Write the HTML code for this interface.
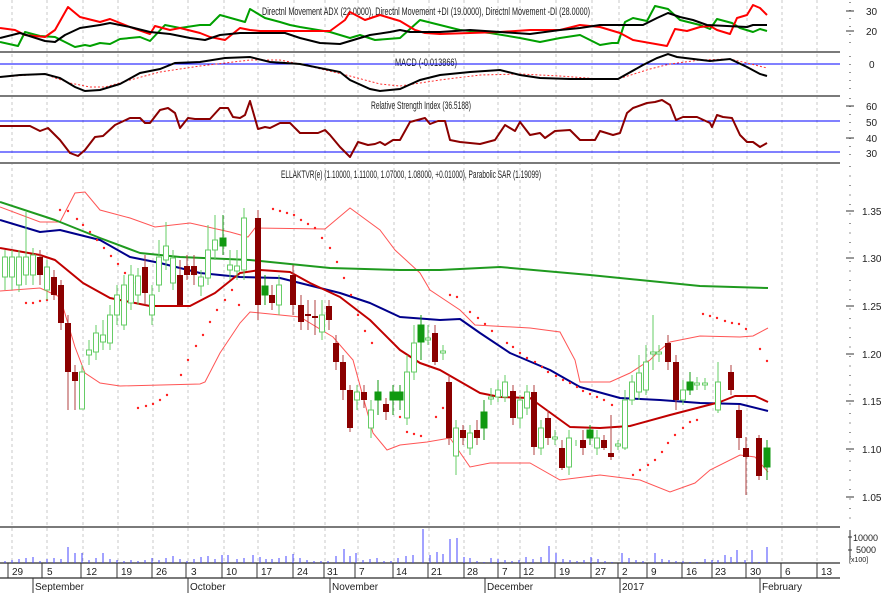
<!DOCTYPE html>
<html><head><meta charset="utf-8"><style>
html,body{margin:0;padding:0;background:#fff;}
svg{display:block;font-family:"Liberation Sans Narrow","Liberation Sans",sans-serif;}
</style></head><body>
<svg width="881" height="593" viewBox="0 0 881 593" xmlns="http://www.w3.org/2000/svg">
<rect width="881" height="593" fill="#fff"/>
<g stroke="#c8c8c8" stroke-width="1" stroke-dasharray="3,3">
<line x1="12" y1="0" x2="12" y2="563"/><line x1="47" y1="0" x2="47" y2="563"/><line x1="83" y1="0" x2="83" y2="563"/><line x1="118" y1="0" x2="118" y2="563"/><line x1="153" y1="0" x2="153" y2="563"/><line x1="188" y1="0" x2="188" y2="563"/><line x1="224" y1="0" x2="224" y2="563"/><line x1="258" y1="0" x2="258" y2="563"/><line x1="294" y1="0" x2="294" y2="563"/><line x1="325" y1="0" x2="325" y2="563"/><line x1="358" y1="0" x2="358" y2="563"/><line x1="394" y1="0" x2="394" y2="563"/><line x1="429" y1="0" x2="429" y2="563"/><line x1="464" y1="0" x2="464" y2="563"/><line x1="498" y1="0" x2="498" y2="563"/><line x1="520" y1="0" x2="520" y2="563"/><line x1="556" y1="0" x2="556" y2="563"/><line x1="592" y1="0" x2="592" y2="563"/><line x1="619" y1="0" x2="619" y2="563"/><line x1="647" y1="0" x2="647" y2="563"/><line x1="683" y1="0" x2="683" y2="563"/><line x1="713" y1="0" x2="713" y2="563"/><line x1="747" y1="0" x2="747" y2="563"/><line x1="782" y1="0" x2="782" y2="563"/><line x1="817" y1="0" x2="817" y2="563"/>
</g>
<g stroke="#7a7a7a" stroke-width="2">
<line x1="0" y1="52" x2="840" y2="52"/><line x1="0" y1="96" x2="840" y2="96"/><line x1="0" y1="163" x2="840" y2="163"/><line x1="0" y1="527" x2="840" y2="527"/><line x1="0" y1="563" x2="840" y2="563"/><line x1="0" y1="578" x2="840" y2="578"/>
</g>
<g stroke="#333" stroke-width="1">
<line x1="850" y1="2" x2="850" y2="50" stroke-dasharray="1,7"/>
<line x1="850" y1="56" x2="850" y2="94" stroke-dasharray="1,7"/>
<line x1="850" y1="98" x2="850" y2="161" stroke-dasharray="1,7"/>
<line x1="850" y1="166" x2="850" y2="524" stroke-dasharray="1,8.5"/>
<line x1="846" y1="11" x2="854" y2="11"/><line x1="846" y1="31" x2="854" y2="31"/><line x1="846" y1="106" x2="854" y2="106"/><line x1="846" y1="138" x2="854" y2="138"/>
<line x1="846" y1="211" x2="854" y2="211"/><line x1="846" y1="258" x2="854" y2="258"/><line x1="846" y1="306" x2="854" y2="306"/><line x1="846" y1="354" x2="854" y2="354"/><line x1="846" y1="401" x2="854" y2="401"/><line x1="846" y1="449" x2="854" y2="449"/><line x1="846" y1="497" x2="854" y2="497"/>
<line x1="848" y1="537" x2="852" y2="537"/><line x1="848" y1="550" x2="852" y2="550"/><line x1="850" y1="530" x2="850" y2="560"/>
</g>
<g font-size="10" fill="#222">
<text x="866" y="15">30</text><text x="866" y="35">20</text><text x="869" y="68">0</text>
<text x="866" y="110">60</text><text x="866" y="126">50</text><text x="866" y="142">40</text><text x="866" y="157">30</text>
<text x="862" y="215">1.35</text><text x="862" y="262">1.30</text><text x="862" y="310">1.25</text><text x="862" y="358">1.20</text><text x="862" y="405">1.15</text><text x="862" y="453">1.10</text><text x="862" y="501">1.05</text>
<text x="853" y="541" font-size="9">10000</text><text x="856" y="553" font-size="9">5000</text><text x="849" y="562" font-size="7">[x100]</text>
</g>
<g font-size="11" fill="#222">
<text x="262" y="15" textLength="328" lengthAdjust="spacingAndGlyphs">Directnl Movement ADX (22.0000), Directnl Movement +DI (19.0000), Directnl Movement -DI (28.0000)</text>
<text x="395" y="66" textLength="62" lengthAdjust="spacingAndGlyphs">MACD (-0.013866)</text>
<text x="371" y="109" textLength="100" lengthAdjust="spacingAndGlyphs">Relative Strength Index (36.5188)</text>
<text x="281" y="178" textLength="260" lengthAdjust="spacingAndGlyphs">ELLAKTVR(e) (1.10000, 1.11000, 1.07000, 1.08000, +0.01000), Parabolic SAR (1.19099)</text>
</g>
<g fill="none" stroke-width="2" stroke-linejoin="round">
<polyline stroke="#00a000" points="0,42 18,46 25,32 40,36 55,37 75,47 85,45 90,46 100,43 110,44 120,39 140,37 150,41 165,25 180,28 200,25 210,25 220,15 245,22 250,9 265,18 280,22 290,25 300,27 330,32 350,38 360,35 375,40 400,38 420,20 440,25 460,30 490,33 520,38 540,42 560,38 580,35 600,45 612,43 618,43 625,22 633,18 647,21 655,6 668,9 680,20 700,25 710,29 717,19 732,23 740,28 753,32 760,29 767,31"/>
<polyline stroke="#ff0000" points="0,28 15,30 25,35 45,37 55,30 68,7 80,17 100,22 110,19 130,27 150,34 155,26 170,30 180,28 200,33 210,37 225,40 240,28 250,30 260,31 330,31 345,20 350,12 365,20 380,15 400,21 415,30 425,33 440,34 470,33 500,32 530,30 560,30 580,25 600,27 620,33 633,40 667,46 675,29 687,31 700,27 710,26 717,30 730,34 737,18 747,15 753,5 760,8 767,15"/>
<polyline stroke="#000" points="0,38 20,33 45,41 55,42 65,35 80,28 100,25 110,23 130,27 150,32 170,34 190,38 205,40 220,35 240,33 285,33 300,38 320,43 340,44 350,41 370,35 390,32 400,30 410,32 440,32 470,30 500,32 530,34 560,30 580,28 600,25 643,25 657,18 668,13 680,17 693,20 707,25 747,27 753,25 767,25"/>
</g>
<line x1="0" y1="64" x2="840" y2="64" stroke="#0000ff" stroke-width="1"/>
<polyline fill="none" stroke="#ff3030" stroke-width="1" stroke-dasharray="2,2" points="0,77 45,74 55,78 70,83 90,87 105,87 130,80 160,72 200,66 250,60 280,60 300,64 350,76 380,84 400,86 440,80 480,75 520,74 560,76 600,79 618,79 650,69 670,64 700,60 730,59 747,63 767,68"/>
<polyline fill="none" stroke="#000" stroke-width="2" points="0,77 20,75 45,74 60,78 75,87 85,91 100,90 120,84 140,73 160,69 175,63 200,62 225,58 250,57 270,62 300,64 340,72 350,80 370,89 380,91 400,89 420,80 440,75 470,72 500,70 520,75 540,78 570,79 618,79 643,65 657,58 668,54 677,57 710,61 730,59 747,67 760,74 767,76"/>
<line x1="0" y1="121" x2="840" y2="121" stroke="#0000ff"/><line x1="0" y1="152" x2="840" y2="152" stroke="#0000ff"/>
<polyline fill="none" stroke="#8b0000" stroke-width="2" stroke-linejoin="round" points="0,126 30,126 40,131 48,128 60,140 70,153 78,156 85,150 95,137 103,136 115,125 130,118 140,118 145,123 150,123 160,110 168,108 175,113 180,128 188,118 195,119 210,119 220,108 228,108 233,117 240,118 245,115 250,101 258,129 265,127 270,128 280,123 290,123 300,133 318,133 325,130 330,135 340,147 350,157 358,142 368,145 375,144 380,142 385,145 393,140 400,140 410,122 425,118 430,124 438,121 445,121 450,140 460,142 480,144 495,140 505,125 515,131 520,122 530,135 540,133 545,138 555,131 570,130 580,140 595,140 600,131 613,135 620,133 627,113 633,108 647,103 655,102 662,100 670,105 676,120 683,117 697,117 710,123 712,127 717,115 723,117 732,118 740,135 747,142 753,142 760,147 767,143"/>
<g fill="none" stroke="#ff5555" stroke-width="1">
<polyline points="0,207 40,222 60,222 75,193 85,192 100,210 130,218 155,227 190,223 230,232 248,237 255,228 325,229 350,208 380,230 395,250 420,273 430,290 460,310 475,325 530,328 560,332 575,360 580,382 610,382 630,373 650,360 660,350 670,342 700,336 740,337 753,336 768,328"/>
<polyline points="0,291 40,288 60,297 75,347 85,373 100,383 120,386 200,384 205,382 220,353 240,323 250,312 300,317 333,337 353,360 373,433 387,450 400,445 427,442 450,438 470,467 490,463 530,463 560,480 600,475 640,480 670,492 695,483 710,470 740,455 755,457 768,472"/>
</g>
<g fill="none" stroke-width="2" stroke-linejoin="round">
<polyline stroke="#1f9a1f" points="0,202 55,220 100,238 140,253 180,257 250,260 300,265 330,268 400,270 440,270 500,267 590,275 700,286 768,288"/>
<polyline stroke="#00008b" points="0,220 40,232 60,230 100,240 130,257 160,263 200,273 240,277 280,278 300,283 340,293 370,303 400,317 440,320 460,319 480,333 510,353 550,370 580,387 620,398 660,400 700,403 740,404 768,411"/>
<polyline stroke="#c00000" points="0,248 40,255 55,260 83,283 110,298 150,306 190,306 215,293 240,273 260,270 290,272 310,283 340,297 370,320 400,350 420,363 440,370 480,393 500,397 530,398 570,427 600,428 630,426 670,415 720,402 735,396 755,396 768,402"/>
</g>
<g fill="#ff2020">
<circle cx="26" cy="303" r="1.2"/><circle cx="33" cy="303" r="1.2"/><circle cx="40" cy="301" r="1.2"/><circle cx="47" cy="300" r="1.2"/>
<circle cx="60" cy="210" r="1.2"/><circle cx="68" cy="211" r="1.2"/><circle cx="77" cy="219" r="1.2"/><circle cx="83" cy="225" r="1.2"/><circle cx="90" cy="232" r="1.2"/><circle cx="97" cy="240" r="1.2"/><circle cx="104" cy="248" r="1.2"/><circle cx="111" cy="256" r="1.2"/><circle cx="118" cy="264" r="1.2"/><circle cx="125" cy="273" r="1.2"/><circle cx="133" cy="283" r="1.2"/>
<circle cx="138" cy="408" r="1.2"/><circle cx="146" cy="406" r="1.2"/><circle cx="153" cy="404" r="1.2"/><circle cx="160" cy="400" r="1.2"/><circle cx="167" cy="395" r="1.2"/>
<circle cx="181" cy="375" r="1.2"/><circle cx="188" cy="360" r="1.2"/><circle cx="196" cy="346" r="1.2"/><circle cx="203" cy="335" r="1.2"/><circle cx="210" cy="322" r="1.2"/><circle cx="217" cy="310" r="1.2"/><circle cx="225" cy="300" r="1.2"/><circle cx="232" cy="290" r="1.2"/><circle cx="239" cy="305" r="1.2"/>
<circle cx="273" cy="209" r="1.2"/><circle cx="280" cy="211" r="1.2"/><circle cx="287" cy="213" r="1.2"/><circle cx="294" cy="215" r="1.2"/><circle cx="301" cy="220" r="1.2"/><circle cx="308" cy="224" r="1.2"/><circle cx="315" cy="228" r="1.2"/><circle cx="322" cy="238" r="1.2"/><circle cx="330" cy="248" r="1.2"/><circle cx="337" cy="262" r="1.2"/><circle cx="344" cy="278" r="1.2"/><circle cx="351" cy="295" r="1.2"/><circle cx="358" cy="315" r="1.2"/><circle cx="365" cy="331" r="1.2"/><circle cx="372" cy="343" r="1.2"/>
<circle cx="386" cy="405" r="1.2"/><circle cx="400" cy="417" r="1.2"/><circle cx="407" cy="432" r="1.2"/><circle cx="414" cy="434" r="1.2"/><circle cx="421" cy="436" r="1.2"/><circle cx="436" cy="417" r="1.2"/><circle cx="443" cy="408" r="1.2"/>
<circle cx="450" cy="295" r="1.2"/><circle cx="457" cy="297" r="1.2"/><circle cx="470" cy="312" r="1.2"/><circle cx="478" cy="318" r="1.2"/><circle cx="485" cy="324" r="1.2"/><circle cx="492" cy="331" r="1.2"/><circle cx="507" cy="343" r="1.2"/><circle cx="513" cy="347" r="1.2"/><circle cx="520" cy="353" r="1.2"/><circle cx="527" cy="358" r="1.2"/><circle cx="535" cy="362" r="1.2"/><circle cx="542" cy="367" r="1.2"/><circle cx="548" cy="372" r="1.2"/><circle cx="556" cy="376" r="1.2"/><circle cx="563" cy="380" r="1.2"/><circle cx="570" cy="383" r="1.2"/><circle cx="577" cy="387" r="1.2"/><circle cx="583" cy="391" r="1.2"/><circle cx="590" cy="394" r="1.2"/><circle cx="597" cy="397" r="1.2"/><circle cx="604" cy="400" r="1.2"/><circle cx="612" cy="405" r="1.2"/>
<circle cx="633" cy="475" r="1.2"/><circle cx="640" cy="470" r="1.2"/><circle cx="648" cy="465" r="1.2"/><circle cx="655" cy="460" r="1.2"/><circle cx="662" cy="452" r="1.2"/><circle cx="668" cy="443" r="1.2"/><circle cx="675" cy="435" r="1.2"/><circle cx="683" cy="428" r="1.2"/><circle cx="690" cy="422" r="1.2"/><circle cx="697" cy="420" r="1.2"/>
<circle cx="703" cy="314" r="1.2"/><circle cx="710" cy="316" r="1.2"/><circle cx="717" cy="318" r="1.2"/><circle cx="725" cy="321" r="1.2"/><circle cx="732" cy="323" r="1.2"/><circle cx="739" cy="324" r="1.2"/><circle cx="746" cy="329" r="1.2"/><circle cx="760" cy="349" r="1.2"/><circle cx="767" cy="361" r="1.2"/>
</g>
<g stroke="#66cc66" stroke-width="1" fill="#fff">
<path d="M5 250V290M12 250V290M19 250V292M26 212V285M33 248V285M47 260V300M82 365V409M89 340V365M96 325V360M103 320V350M110 305V350M117 285V325M124 275V330M131 265V310M138 268V305M152 285V325M159 240V292M166 222V270M173 250V290M201 270V296M208 225V285M215 215V260M230 250V280M237 250V280M244 208V280M279 275V315M322 300V340M357 385V410M371 400V438M407 355V425M414 325V380M428 325V345M443 345V360M456 420V475M470 425V455M491 388V405M498 380V402M505 375V402M520 395V428M527 385V415M541 420V455M555 430V445M569 430V475M576 440V446M597 430V455M618 440V450M625 390V450M632 375V405M639 355V400M646 345V395M653 315V370M659 345V362M683 380V405M697 377V390M705 378V390M718 362V413M767 440V480"/>
<rect x="2.5" y="257" width="5" height="20"/><rect x="9.5" y="257" width="5" height="20"/><rect x="16.5" y="257" width="5" height="28"/><rect x="23.5" y="257" width="5" height="18"/><rect x="30.5" y="255" width="5" height="20"/><rect x="44.5" y="267" width="5" height="23"/>
<rect x="79.5" y="372" width="5" height="37"/><rect x="86.5" y="350" width="5" height="5"/><rect x="93.5" y="333" width="5" height="19"/><rect x="100.5" y="335" width="5" height="7"/><rect x="107.5" y="315" width="5" height="28"/><rect x="114.5" y="295" width="5" height="20"/><rect x="121.5" y="285" width="5" height="40"/><rect x="128.5" y="275" width="5" height="28"/><rect x="135.5" y="276" width="5" height="19"/><rect x="149.5" y="295" width="5" height="20"/><rect x="156.5" y="257" width="5" height="28"/><rect x="163.5" y="246" width="5" height="14"/><rect x="170.5" y="258" width="5" height="25"/>
<rect x="198.5" y="277" width="5" height="9"/><rect x="205.5" y="250" width="5" height="28"/><rect x="212.5" y="240" width="5" height="10"/><rect x="227.5" y="265" width="5" height="5"/><rect x="234.5" y="266" width="5" height="5"/><rect x="241.5" y="218" width="5" height="52"/><rect x="276.5" y="285" width="5" height="20"/><rect x="319.5" y="315" width="5" height="17"/>
<rect x="354.5" y="392" width="5" height="8"/><rect x="368.5" y="410" width="5" height="18"/><rect x="404.5" y="372" width="5" height="46"/><rect x="411.5" y="343" width="5" height="29"/><rect x="425.5" y="338" width="5" height="2"/><rect x="440.5" y="351" width="5" height="2"/>
<rect x="453.5" y="428" width="5" height="28"/><rect x="467.5" y="433" width="5" height="15"/><rect x="488.5" y="397" width="5" height="2"/><rect x="495.5" y="390" width="5" height="7"/><rect x="502.5" y="382" width="5" height="15"/><rect x="517.5" y="400" width="5" height="18"/><rect x="524.5" y="392" width="5" height="16"/><rect x="538.5" y="428" width="5" height="20"/><rect x="552.5" y="437" width="5" height="2"/><rect x="566.5" y="438" width="5" height="29"/><rect x="594.5" y="438" width="5" height="10"/><rect x="615.5" y="444" width="5" height="2"/><rect x="622.5" y="400" width="5" height="48"/><rect x="629.5" y="382" width="5" height="18"/><rect x="636.5" y="373" width="5" height="19"/><rect x="643.5" y="362" width="5" height="28"/><rect x="650.5" y="352" width="5" height="2"/><rect x="656.5" y="352" width="5" height="2"/><rect x="680.5" y="390" width="5" height="10"/><rect x="694.5" y="383" width="5" height="2"/><rect x="702.5" y="383" width="5" height="2"/><rect x="715.5" y="382" width="5" height="28"/>
</g>
<g stroke="#b04040" stroke-width="1">
<path d="M40 250V285M54 270V300M61 280V330M68 315V410M75 365V410M145 255V305M180 260V305M187 255V280M194 255V285M258 210V320M272 285V310M293 265V315M301 295V330M308 300V330M315 300V335M329 300V330M336 335V370M343 355V400M350 385V432M364 385V408M386 398V420M435 325V365M449 375V445M463 425V445M477 420V445M513 385V425M534 385V455M548 410V445M562 440V470M583 430V455M604 435V450M611 415V460M668 335V370M676 355V410M731 365V395M739 405V450M746 437V495M759 435V480"/>
</g>
<g fill="#8b0000">
<rect x="37" y="257" width="6" height="18"/><rect x="51" y="277" width="6" height="18"/><rect x="58" y="285" width="6" height="38"/><rect x="65" y="323" width="6" height="49"/><rect x="72" y="372" width="6" height="9"/>
<rect x="142" y="267" width="6" height="26"/><rect x="177" y="275" width="6" height="30"/><rect x="184" y="266" width="6" height="9"/><rect x="191" y="266" width="6" height="9"/>
<rect x="255" y="218" width="6" height="87"/><rect x="269" y="295" width="6" height="8"/><rect x="290" y="275" width="6" height="30"/><rect x="298" y="305" width="6" height="17"/><rect x="305" y="314" width="6" height="2"/><rect x="312" y="316" width="6" height="2"/><rect x="326" y="306" width="6" height="14"/><rect x="333" y="343" width="6" height="19"/><rect x="340" y="362" width="6" height="28"/><rect x="347" y="390" width="6" height="38"/><rect x="361" y="392" width="6" height="8"/><rect x="383" y="404" width="6" height="8"/>
<rect x="432" y="333" width="6" height="29"/><rect x="446" y="382" width="6" height="56"/><rect x="460" y="430" width="6" height="8"/><rect x="474" y="430" width="6" height="8"/><rect x="510" y="391" width="6" height="27"/><rect x="531" y="392" width="6" height="55"/><rect x="545" y="418" width="6" height="20"/><rect x="559" y="448" width="6" height="20"/><rect x="580" y="440" width="6" height="8"/><rect x="601" y="440" width="6" height="8"/><rect x="608" y="453" width="6" height="4"/>
<rect x="665" y="343" width="6" height="19"/><rect x="673" y="362" width="6" height="38"/><rect x="728" y="372" width="6" height="18"/><rect x="736" y="410" width="6" height="28"/><rect x="743" y="448" width="6" height="9"/><rect x="756" y="438" width="6" height="38"/>
</g>
<g stroke="#119911" fill="#119911">
<path d="M223 215V255M265 275V305M378 380V415M393 385V415M400 385V410M421 315V360M484 400V440M590 425V445M690 372V395M767 440V480" fill="none"/>
<rect x="220" y="238" width="6" height="8"/><rect x="262" y="286" width="6" height="9"/><rect x="375" y="392" width="6" height="8"/><rect x="390" y="392" width="6" height="8"/><rect x="397" y="392" width="6" height="8"/><rect x="418" y="325" width="6" height="17"/><rect x="481" y="412" width="6" height="16"/><rect x="587" y="430" width="6" height="8"/><rect x="687" y="382" width="6" height="8"/><rect x="764" y="448" width="6" height="19"/>
</g>
<g stroke="#4444ff" stroke-width="1">
<path d="M5 563V561M12 563V560M19 563V559M26 563V558M33 563V557M40 563V561M47 563V559M54 563V558M61 563V559M68 563V547M75 563V553M82 563V553M89 563V560M96 563V558M103 563V553M110 563V559M117 563V560M124 563V561M131 563V560M138 563V561M145 563V560M152 563V558M159 563V560M166 563V558M173 563V556M180 563V559M187 563V561M194 563V559M201 563V557M208 563V556M215 563V559M222 563V555M228 563V555M237 563V559M244 563V558M253 563V555M260 563V557M266 563V559M272 563V559M279 563V558M286 563V556M293 563V554M300 563V558M307 563V560M314 563V561M321 563V561M328 563V561M336 563V556M344 563V549M350 563V556M356 563V553M363 563V560M370 563V559M377 563V558M384 563V561M391 563V561M398 563V558M406 563V556M413 563V555M423 563V529M430 563V555M437 563V552M443 563V554M450 563V539M457 563V538M464 563V557M470 563V558M477 563V561M484 563V562M491 563V558M498 563V559M505 563V560M512 563V561M519 563V560M526 563V557M533 563V559M541 563V557M549 563V546M556 563V553M563 563V559M570 563V560M577 563V561M584 563V560M591 563V557M598 563V559M605 563V561M612 563V562M622 563V553M629 563V558M636 563V560M643 563V561M655 563V553M662 563V559M669 563V560M676 563V561M683 563V561M690 563V562M697 563V562M705 563V559M712 563V560M718 563V560M725 563V555M731 563V557M737 563V550M745 563V560M752 563V550M759 563V562M767 563V547"/>
</g>
<g stroke="#333" stroke-width="1">
<path d="M8 563V578M42 563V578M81 563V578M117 563V578M152 563V578M186 563V578M222 563V578M257 563V578M293 563V578M324 563V578M355 563V578M393 563V578M428 563V578M464 563V578M498 563V578M520 563V578M555 563V578M591 563V578M618 563V578M647 563V578M682 563V578M712 563V578M746 563V578M781 563V578M817 563V578"/>
<path d="M33 578V593M188 578V593M330 578V593M485 578V593M620 578V593M760 578V593"/>
</g>
<g font-size="10" fill="#222">
<text x="12" y="575">29</text><text x="47" y="575">5</text><text x="86" y="575">12</text><text x="121" y="575">19</text><text x="156" y="575">26</text><text x="191" y="575">3</text><text x="226" y="575">10</text><text x="261" y="575">17</text><text x="297" y="575">24</text><text x="327" y="575">31</text><text x="359" y="575">7</text><text x="396" y="575">14</text><text x="431" y="575">21</text><text x="467" y="575">28</text><text x="502" y="575">7</text><text x="523" y="575">12</text><text x="559" y="575">19</text><text x="595" y="575">27</text><text x="622" y="575">2</text><text x="651" y="575">9</text><text x="686" y="575">16</text><text x="715" y="575">23</text><text x="750" y="575">30</text><text x="785" y="575">6</text><text x="821" y="575">13</text>
<text x="35" y="590">September</text><text x="190" y="590">October</text><text x="332" y="590">November</text><text x="487" y="590">December</text><text x="622" y="590">2017</text><text x="762" y="590">February</text>
</g>
</svg>
</body></html>
